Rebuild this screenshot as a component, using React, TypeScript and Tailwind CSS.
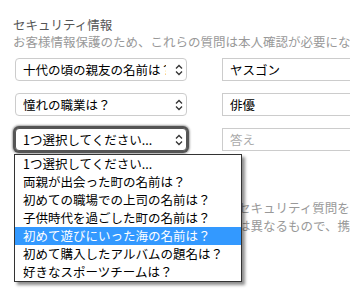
const options = [
  '1つ選択してください...',
  '両親が出会った町の名前は？',
  '初めての職場での上司の名前は？',
  '子供時代を過ごした町の名前は？',
  '初めて遊びにいった海の名前は？',
  '初めて購入したアルバムの題名は？',
  '好きなスポーツチームは？',
];

const Chevrons = () => (
  <svg width="8" height="12" viewBox="0 0 8 12" className="shrink-0">
    <path d="M1 4.5 L4 1.5 L7 4.5" fill="none" stroke="#333" strokeWidth="1.3" />
    <path d="M1 7.5 L4 10.5 L7 7.5" fill="none" stroke="#333" strokeWidth="1.3" />
  </svg>
);

function FakeSelect({ label, focused }: { label: string; focused?: boolean }) {
  return (
    <div
      className={`flex h-[23px] w-[172px] shrink-0 items-center justify-between rounded-[4px] border bg-white pl-[7px] pr-[3px] ${
        focused ? 'border-[#555] shadow-[0_0_0_2px_#555,0_0_2px_3px_rgba(0,0,0,0.35)]' : 'border-[#ccc]'
      }`}
    >
      <span className="w-[143px] overflow-hidden whitespace-nowrap text-black">{label}</span>
      <Chevrons />
    </div>
  );
}

function Row({ q, a, focused }: { q: string; a: string; focused?: boolean }) {
  return (
    <div className="flex items-center gap-[35px]">
      <FakeSelect label={q} focused={focused} />
      <div className="flex h-[23px] w-[160px] shrink-0 items-center border border-[#ccc] pl-[7px]">
        {a ? <span className="text-black">{a}</span> : <span className="text-[#aaa]">答え</span>}
      </div>
    </div>
  );
}

export default function App() {
  return (
    <div className="relative h-[291px] w-[350px] overflow-hidden bg-white text-[12.5px] leading-[17px] font-['Noto_Sans_CJK_JP',sans-serif]">
      <div className="pl-[13px] pt-[16px]">
        <h2 className="text-[#555]">セキュリティ情報</h2>
        <p className="whitespace-nowrap text-[#999]">
          お客様情報保護のため、これらの質問は本人確認が必要になる場合に使用されます。
        </p>

        <div className="mt-[8px] flex flex-col gap-[12px] pl-[2px]">
          <Row q="十代の頃の親友の名前は？" a="ヤスゴン" />
          <Row q="憧れの職業は？" a="俳優" />
          <Row q="1つ選択してください..." a="" focused />
        </div>

        <p className="mt-[48px] whitespace-nowrap leading-[18px] text-[#999]">
          ご登録のパスワード再設定時に使用するセキュリティ質問を
          <br />
          ※ログイン時のパスワードや暗証番号とは異なるもので、携帯電話からも利用できます。
        </p>
      </div>

      {/* open dropdown list */}
      <ul className="absolute left-[14px] top-[154px] w-[228px] border border-[#333] bg-white shadow-[3px_3px_3px_rgba(0,0,0,0.45)]">
        {options.map((o, i) => (
          <li
            key={o}
            className={`h-[18px] whitespace-nowrap pl-[8px] leading-[18px] ${
              i === 4 ? 'bg-[#3399ff] text-white' : 'text-black'
            }`}
          >
            {o}
          </li>
        ))}
      </ul>
    </div>
  );
}
